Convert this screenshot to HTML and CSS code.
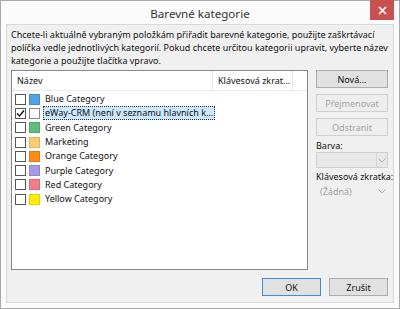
FILE: index.html
```html
<!DOCTYPE html>
<html lang="cs">
<head>
<meta charset="UTF-8">
<title>Barevné kategorie</title>
<link rel="stylesheet" href="styles.css">
</head>
<body>

<div class="window">
    <div class="titlebar">
        <span class="title">Barevné kategorie</span>
        <div class="close">
            <svg width="9" height="9" viewBox="0 0 9 9"><path d="M1 1 L8 8 M8 1 L1 8" stroke="#fff" stroke-width="1.7"/></svg>
        </div>
    </div>

    <div class="client">
        <p class="intro">Chcete-li aktuálně vybraným položkám přiřadit barevné kategorie, použijte zaškrtávací políčka vedle jednotlivých kategorií. Pokud chcete určitou kategorii upravit, vyberte název kategorie a použijte tlačítka vpravo.</p>

        <div class="main">
            <div class="list">
                <div class="list-head">
                    <div class="col-name">Název</div>
                    <div class="col-key">Klávesová zkrat...</div>
                    <div class="col-rest"></div>
                </div>
                <div class="row"><span class="check"></span><span class="swatch" style="background:#4da3e4"></span><span class="label">Blue Category</span></div>
                <div class="row"><span class="check checked"><svg width="9" height="9" viewBox="0 0 9 9"><path d="M1 4.5 L3.5 7 L8 1.5" fill="none" stroke="#111" stroke-width="1.5"/></svg></span><span class="swatch empty"></span><span class="label selected">eWay-CRM (není v seznamu hlavních k...</span></div>
                <div class="row"><span class="check"></span><span class="swatch" style="background:#5fbf7a"></span><span class="label">Green Category</span></div>
                <div class="row"><span class="check"></span><span class="swatch" style="background:#ffca72"></span><span class="label">Marketing</span></div>
                <div class="row"><span class="check"></span><span class="swatch" style="background:#ff8c10"></span><span class="label">Orange Category</span></div>
                <div class="row"><span class="check"></span><span class="swatch" style="background:#a89be6"></span><span class="label">Purple Category</span></div>
                <div class="row"><span class="check"></span><span class="swatch" style="background:#f47d89"></span><span class="label">Red Category</span></div>
                <div class="row"><span class="check"></span><span class="swatch" style="background:#ffee00"></span><span class="label">Yellow Category</span></div>
            </div>

            <div class="side">
                <button class="btn">Nová...</button>
                <button class="btn disabled">Přejmenovat</button>
                <button class="btn disabled">Odstranit</button>
                <div class="field-label first">Barva:</div>
                <div class="select"><span></span><span class="arrow"><svg width="8" height="5" viewBox="0 0 8 5"><path d="M0.5 0.5 L4 4 L7.5 0.5" fill="none" stroke="#b0b0b0" stroke-width="1"/></svg></span></div>
                <div class="field-label">Klávesová zkratka:</div>
                <div class="select plain"><span>(Žádná)</span><span class="arrow"><svg width="8" height="5" viewBox="0 0 8 5"><path d="M0.5 0.5 L4 4 L7.5 0.5" fill="none" stroke="#b0b0b0" stroke-width="1"/></svg></span></div>
            </div>
        </div>

        <div class="footer">
            <button class="btn default">OK</button>
            <button class="btn">Zrušit</button>
        </div>
    </div>
</div>

</body>
</html>
```

FILE: styles.css
```css
body {
    margin: 0;
    font-family: 'Noto Sans', sans-serif;
    font-size: 9px;
    color: #111;
    background: #fff;
}

/* Window frame */
.window {
    width: 400px;
    height: 309px;
    box-sizing: border-box;
    border: 1px solid #a9a9a9;
    background: #fbfbfb;
    display: flex;
    flex-direction: column;
}
.titlebar {
    height: 23px;
    display: flex;
    align-items: center;
    justify-content: center;
    position: relative;
}
.title {
    font-size: 11.6px;
    color: #333;
    margin-top: 2px;
}
.close {
    position: absolute;
    top: -1px;
    right: 5px;
    width: 24px;
    height: 20px;
    background: #c75050;
    display: flex;
    align-items: center;
    justify-content: center;
}

.client {
    flex: 1;
    margin: 0 5px 5px 5px;
    border: 1px solid #d9d9d9;
    background: #f0f0f0;
    padding: 3px 5px 6px 4px;
    display: flex;
    flex-direction: column;
}
.intro {
    margin: 0;
    line-height: 13px;
    height: 39px;
}

.main {
    display: flex;
    gap: 8px;
    margin-top: 3px;
}

/* Category list */
.list {
    width: 297px;
    height: 200px;
    box-sizing: border-box;
    border: 1px solid #828790;
    background: #fff;
}
.list-head {
    display: flex;
    height: 19px;
    border-bottom: 1px solid #eaeaea;
    margin-bottom: 1px;
}
.list-head div {
    display: flex;
    align-items: center;
    padding-left: 5px;
    box-sizing: border-box;
    white-space: nowrap;
}
.col-name {
    width: 201px;
    border-right: 1px solid #e5e5e5;
}
.col-key {
    width: 80px;
    border-right: 1px solid #e5e5e5;
}
.col-rest {
    flex: 1;
}
.row {
    height: 14.3px;
    display: flex;
    align-items: center;
    padding-left: 3px;
}
.check {
    width: 11px;
    height: 11px;
    box-sizing: border-box;
    border: 1px solid #555;
    background: #fff;
    display: flex;
    align-items: center;
    justify-content: center;
}
.swatch {
    width: 11px;
    height: 11px;
    margin-left: 3px;
    box-sizing: border-box;
    border: 1px solid rgba(0,0,0,0.12);
}
.swatch.empty {
    background: #fff;
    border-color: #8a8a8a;
}
.label {
    margin-left: 4px;
    padding: 0 1px;
    white-space: nowrap;
    line-height: 12px;
}
.label.selected {
    margin-left: 3px;
    background: #cce8ff;
    border: 1px dotted #333;
    box-sizing: border-box;
}

/* Right-hand buttons */
.side {
    width: 72px;
    display: flex;
    flex-direction: column;
}
.btn {
    font-family: 'Noto Sans', sans-serif;
    font-size: 9px;
    height: 18px;
    padding: 0;
    border: 1px solid #adadad;
    background: #e1e1e1;
    color: #111;
    margin: 0 0 6px;
}
.btn.disabled {
    border-color: #d0d0d0;
    background: #eeeeee;
    color: #a3a3a3;
}
.btn.default {
    border-color: #3c8fd9;
}
.field-label {
    height: 12px;
    line-height: 12px;
    white-space: nowrap;
}
.field-label.first {
    margin-top: -2px;
}
.select {
    height: 16px;
    margin: 0 0 3px;
    box-sizing: border-box;
    border: 1px solid #cfcfcf;
    background: #e8e8e8;
    display: flex;
    justify-content: space-between;
    align-items: center;
    color: #a3a3a3;
}
.select.plain {
    background: transparent;
    border-color: transparent;
}
.select span:first-child {
    padding-left: 3px;
}
.arrow {
    width: 10px;
    height: 100%;
    border-left: 1px solid #d5d5d5;
    display: flex;
    align-items: center;
    justify-content: center;
}
.select.plain .arrow {
    border-left-color: transparent;
}

/* Footer */
.footer {
    margin-top: auto;
    display: flex;
    justify-content: flex-end;
    gap: 8px;
}
.footer .btn {
    width: 59px;
    margin: 0;
}
```
